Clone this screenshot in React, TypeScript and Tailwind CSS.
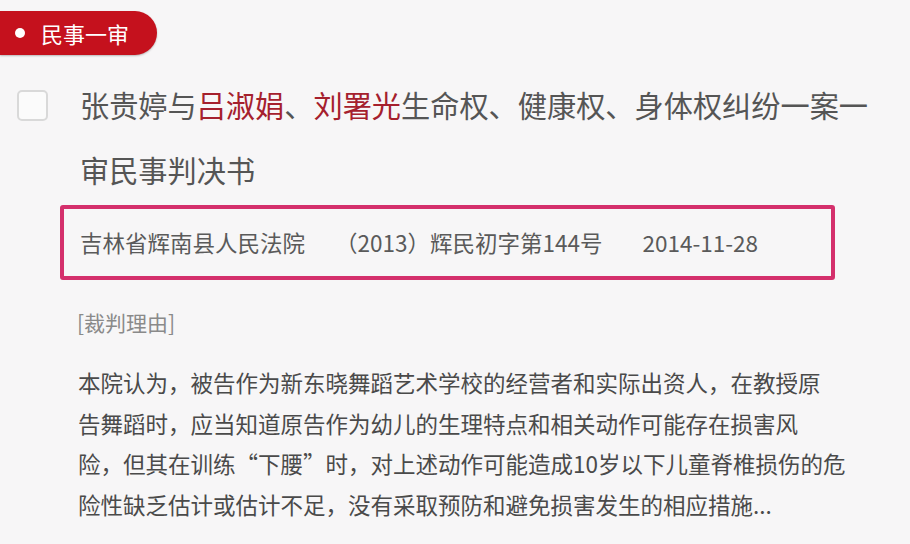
const FONT = '"Noto Sans CJK SC", "Noto Sans", sans-serif';

const REASON_LINES = [
  "本院认为，被告作为新东晓舞蹈艺术学校的经营者和实际出资人，在教授原",
  "告舞蹈时，应当知道原告作为幼儿的生理特点和相关动作可能存在损害风",
  "险，但其在训练“下腰”时，对上述动作可能造成10岁以下儿童脊椎损伤的危",
  "险性缺乏估计或估计不足，没有采取预防和避免损害发生的相应措施...",
];

export default function App() {
  return (
    <div className="min-h-screen w-[910px] bg-[#f7f6f7] pt-[11px]" style={{ fontFamily: FONT }}>
      <div className="flex h-[44px] w-[157px] items-center rounded-r-full bg-[#c5111d] shadow-[0_1px_2px_rgba(0,0,0,0.25)]">
        <span className="ml-[15px] h-[10px] w-[10px] rounded-full bg-white" />
        <span className="ml-[16px] text-[22px] leading-none text-white">民事一审</span>
      </div>

      <div className="mt-[17px] flex">
        <div className="ml-[17px] mt-[18px] h-[31px] w-[31px] shrink-0 rounded-[5px] border-2 border-[#d9d9d9] bg-[#fbfbfb]" />
        <h1 className="ml-[32px] text-[29.2px] font-normal leading-[65px] text-[#555]">
          张贵婷与<span className="text-[#a5202d]">吕淑娟</span>、<span className="text-[#a5202d]">刘署光</span>生命权、健康权、身体权纠纷一案一
          <br />
          审民事判决书
        </h1>
      </div>

      <div className="ml-[60px] mt-[3px] flex h-[75px] w-[775px] items-center whitespace-nowrap rounded-[3px] border-[4px] border-[#d4306c] pl-[16px] text-[22.5px] text-[#5a5a5a]">
        <span>吉林省辉南县人民法院</span>
        <span className="ml-[30px]">（2013）辉民初字第144号</span>
        <span className="ml-[40px]">2014-11-28</span>
      </div>

      <div className="ml-[77px] mt-[27px] text-[21px] leading-[30px] text-[#8a8a8a]">[裁判理由]</div>

      <div className="ml-[78px] mt-[25px] text-[22.5px] leading-[40.5px] text-[#4a4a4a]">
        {REASON_LINES.map((line) => (
          <div key={line} className="whitespace-nowrap">
            {line}
          </div>
        ))}
      </div>
    </div>
  );
}
